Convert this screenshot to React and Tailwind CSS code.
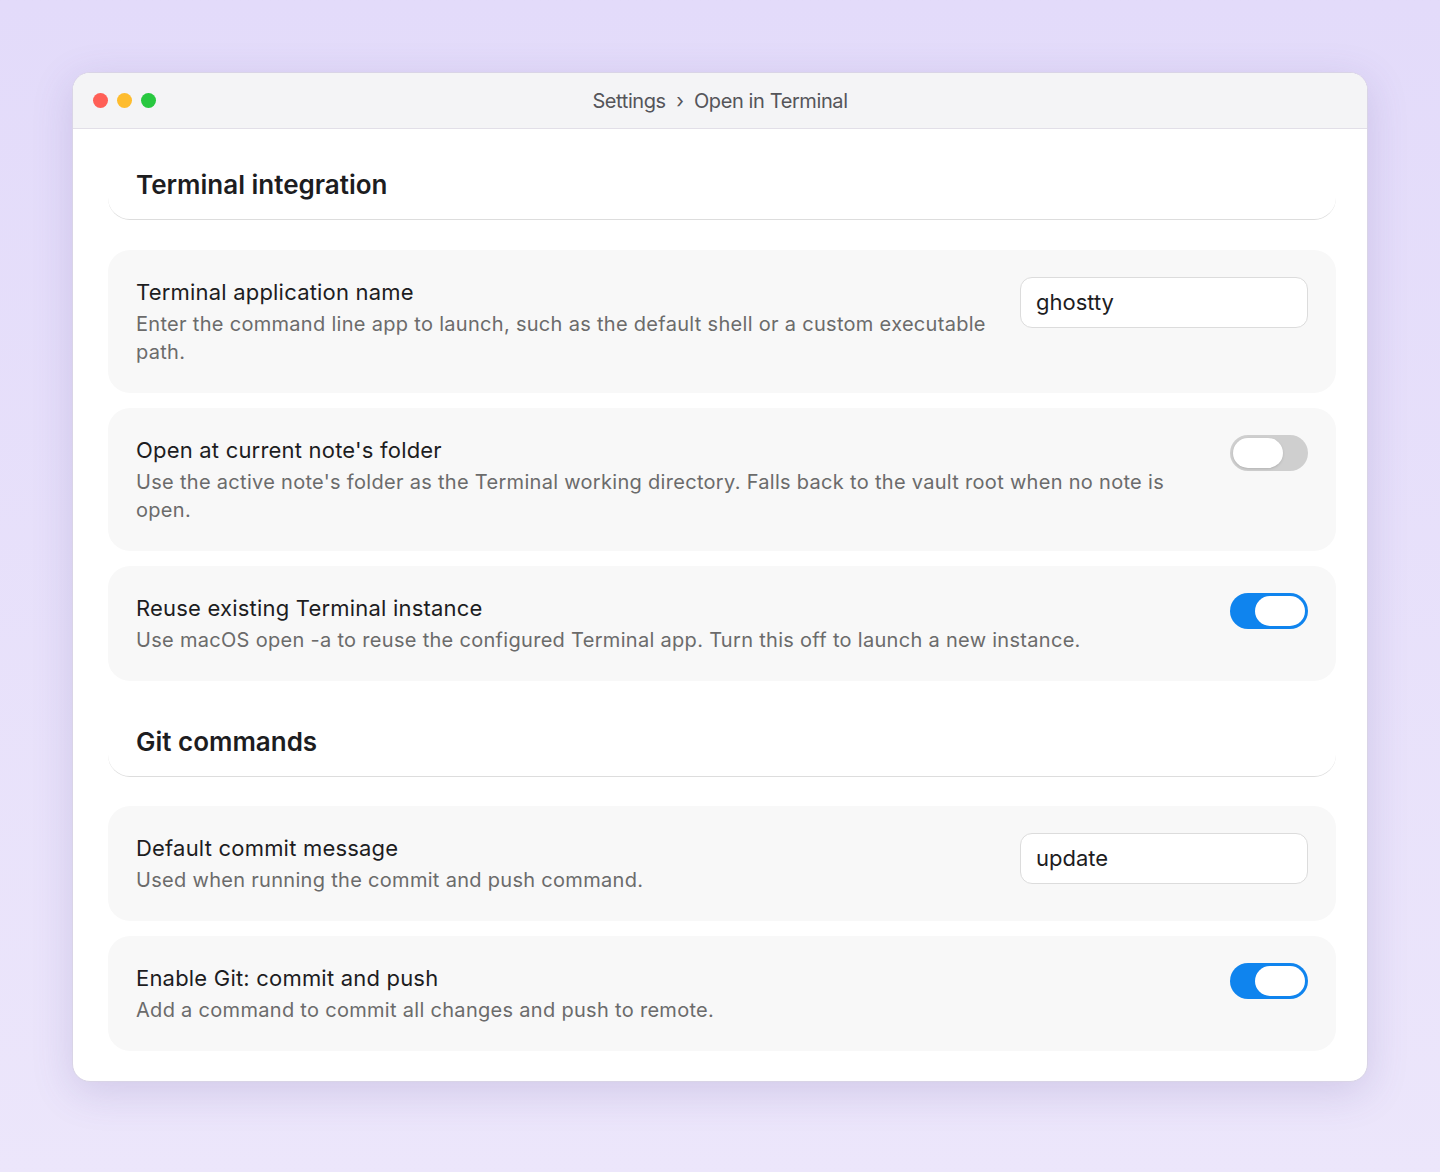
import React from 'react';

const Toggle = ({ on }) => (
    <div className={`w-[78px] h-[36px] rounded-full p-[3px] flex shrink-0 ${on ? 'bg-[#0f84ee] justify-end' : 'bg-[#cfcfcf] justify-start'}`}>
        <div className={`w-[50px] h-[30px] rounded-full bg-white ${on ? '' : 'shadow-sm'}`} />
    </div>
);

const Row = ({ title, desc, children, top = 'mt-[15px]' }) => (
    <div className={`${top} bg-[#f8f8f8] rounded-[22px] px-[28px] pt-[27px] pb-[27px] flex items-start gap-8`}>
        <div className="flex-1 min-w-0">
            <div className="text-[22px] leading-[30px] text-[#1d1d1f] tracking-[0.2px]">{title}</div>
            <div className="mt-[3px] text-[20px] leading-[28px] text-[#6b6b6b] tracking-[0.3px] max-w-[1060px]">{desc}</div>
        </div>
        {children}
    </div>
);

const Field = ({ value }) => (
    <div className="w-[288px] h-[51px] shrink-0 bg-white border border-[#dcdcdc] rounded-[12px] px-[15px] flex items-center text-[22px] text-[#1d1d1f]">{value}</div>
);

const Heading = ({ children, top }) => (
    <div className={`${top} border-b border-[#dddddd] rounded-b-[22px] px-[28px] pb-[17px] text-[26px] font-semibold text-[#1d1d1f] leading-[34px]`}>{children}</div>
);

export default function App() {
    return (
        <div className="min-h-[1172px] bg-gradient-to-b from-[#e3dbfa] to-[#ece6fb] pt-[72px] px-[72px] font-[Inter,sans-serif]">
            <div className="bg-white rounded-[18px] overflow-hidden shadow-[0_10px_40px_rgba(90,70,150,0.18)] border border-[#d9d4e6]">
                <div className="h-[56px] bg-[#f4f4f6] border-b border-[#e2dfe8] relative flex items-center justify-center">
                    <div className="absolute left-[20px] top-[20px] flex gap-[9px]">
                        <div className="w-[15px] h-[15px] rounded-full bg-[#ff5f57]" />
                        <div className="w-[15px] h-[15px] rounded-full bg-[#febc2e]" />
                        <div className="w-[15px] h-[15px] rounded-full bg-[#28c840]" />
                    </div>
                    <div className="text-[20px] text-[#55555a] tracking-[-0.4px]">Settings &nbsp;›&nbsp; Open in Terminal</div>
                </div>
                <div className="pl-[35px] pr-[31px] pb-[30px]">
                    <Heading top="mt-[39px]">Terminal integration</Heading>
                    <Row top="mt-[30px]" title="Terminal application name" desc="Enter the command line app to launch, such as the default shell or a custom executable path.">
                        <Field value="ghostty" />
                    </Row>
                    <Row title="Open at current note's folder" desc="Use the active note's folder as the Terminal working directory. Falls back to the vault root when no note is open.">
                        <Toggle on={false} />
                    </Row>
                    <Row title="Reuse existing Terminal instance" desc="Use macOS open -a to reuse the configured Terminal app. Turn this off to launch a new instance.">
                        <Toggle on />
                    </Row>
                    <Heading top="mt-[44px]">Git commands</Heading>
                    <Row top="mt-[29px]" title="Default commit message" desc="Used when running the commit and push command.">
                        <Field value="update" />
                    </Row>
                    <Row title="Enable Git: commit and push" desc="Add a command to commit all changes and push to remote.">
                        <Toggle on />
                    </Row>
                </div>
            </div>
        </div>
    );
}
